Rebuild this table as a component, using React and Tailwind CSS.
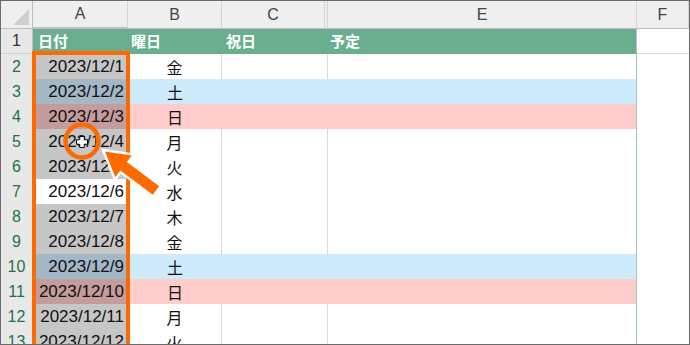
import React from 'react';

// sheet rows 2..13 (row 1 is the green table header)
const ROWS = [
  { d: '2023/12/1', w: '金', t: 'w' },
  { d: '2023/12/2', w: '土', t: 's' },
  { d: '2023/12/3', w: '日', t: 'p' },
  { d: '2023/12/4', w: '月', t: 'w' },
  { d: '2023/12/5', w: '火', t: 'w' },
  { d: '2023/12/6', w: '水', t: 'w', active: true },
  { d: '2023/12/7', w: '木', t: 'w' },
  { d: '2023/12/8', w: '金', t: 'w' },
  { d: '2023/12/9', w: '土', t: 's' },
  { d: '2023/12/10', w: '日', t: 'p' },
  { d: '2023/12/11', w: '月', t: 'w' },
  { d: '2023/12/12', w: '火', t: 'w' },
];

const FILL = { w: 'bg-white', s: 'bg-[#cdebfb]', p: 'bg-[#ffcccc]' };
const SEL = { w: 'bg-[#c6c6c6]', s: 'bg-[#a2b8c6]', p: 'bg-[#c49c9c]' };

const COLS = 'grid grid-cols-[32px_95px_94px_103px_3px_309px_52px]';
const JP = "font-['Noto_Sans_CJK_JP',sans-serif]";
const NUM = "font-['Liberation_Sans','Noto_Sans_CJK_JP',sans-serif]";

const ColHead = ({ children, className = '' }) => (
  <div
    className={`flex items-center justify-center border-r border-b border-r-[#d4d4d4] border-b-[#bfbfbf] bg-[#efefef] text-[16px] text-[#444] ${NUM} ${className}`}
  >
    {children}
  </div>
);

const RowHead = ({ n, selected }) => (
  <div
    className={`flex items-center justify-center border-r border-b border-r-[#bdbdbd] border-b-[#d2d2d2] bg-[#e8e8e8] text-[16px] ${NUM} ${
      selected ? 'text-[#217346]' : 'text-[#333]'
    }`}
  >
    {n}
  </div>
);

const Overlay = () => (
  <svg
    className="pointer-events-none absolute left-[-1px] top-[-1px]"
    width="690"
    height="345"
    viewBox="0 0 690 345"
  >
    <circle cx="82" cy="141" r="16.5" fill="none" stroke="#ff6a00" strokeWidth="4.5" />
    <path
      d="M79.75 136.5H84.25V139.75H87.5V144.25H84.25V147.5H79.75V144.25H76.5V139.75H79.75Z"
      fill="#fff"
      stroke="#000"
      strokeWidth="1"
    />
    <polygon
      points="103,150 134,154.6 128.6,161.7 161,186 153,196.6 120.6,172.3 115,179.6"
      fill="#ff6a00"
      stroke="#fff"
      strokeWidth="2.5"
      strokeLinejoin="miter"
    />
  </svg>
);

export default function App() {
  return (
    <div className="relative h-[345px] w-[690px] overflow-hidden border border-[#6b6b6b] bg-white">
      {/* column headers */}
      <div className={`${COLS} h-[28px]`}>
        <div className="relative border-r border-b border-r-[#bdbdbd] border-b-[#bfbfbf] bg-[#efefef]">
          <svg className="absolute bottom-[3px] right-[3px]" width="16" height="16" viewBox="0 0 16 16">
            <polygon points="16,0 16,16 0,16" fill="#cfcfcf" />
          </svg>
        </div>
        <ColHead className="bg-[#d3d3d3] border-b-2 border-b-[#217346] text-[#1f5f3c]">A</ColHead>
        <ColHead>B</ColHead>
        <ColHead>C</ColHead>
        <ColHead />
        <ColHead>E</ColHead>
        <ColHead>F</ColHead>
      </div>

      {/* row 1: table header */}
      <div className={`${COLS} h-[25px]`}>
        <RowHead n={1} />
        <div className={`col-span-5 grid grid-cols-[95px_94px_106px_309px] bg-[#6aae8f] text-[15px] font-bold text-white ${JP}`}>
          <div className="flex items-center pl-[5px]">日付</div>
          <div className="flex items-center pl-[3px]">曜日</div>
          <div className="flex items-center pl-[4px]">祝日</div>
          <div className="flex items-center pl-[2px] border-r border-r-[#bfbfbf]">予定</div>
        </div>
        <div className="border-b border-b-[#dadada]" />
      </div>

      {/* data rows */}
      {ROWS.map((r, i) => (
        <div key={i} className={`${COLS} h-[25px]`}>
          <RowHead n={i + 2} selected />
          <div
            className={`flex items-center justify-end border-b border-b-[#a6cfbd] pr-[4px] text-[17px] text-[#111] ${NUM} ${
              r.active ? 'bg-white' : SEL[r.t]
            }`}
          >
            {r.d}
          </div>
          <div
            className={`flex items-center justify-center border-b border-b-[#a6cfbd] text-[16px] text-[#111] ${JP} ${FILL[r.t]} ${
              r.t === 'w' ? 'border-r border-r-[#dadada]' : ''
            }`}
          >
            {r.w}
          </div>
          <div
            className={`col-span-2 border-b border-b-[#a6cfbd] ${FILL[r.t]} ${
              r.t === 'w' ? 'border-r border-r-[#dadada]' : ''
            }`}
          />
          <div className={`border-b border-r border-b-[#a6cfbd] border-r-[#9cc9b5] ${FILL[r.t]}`} />
          <div className="border-b border-b-[#dadada] bg-white" />
        </div>
      ))}

      {/* selection highlight frame around column A */}
      <div className="pointer-events-none absolute left-[31px] top-[50px] h-[310px] w-[98px] border-4 border-[#ff6a00]" />

      <Overlay />
    </div>
  );
}
